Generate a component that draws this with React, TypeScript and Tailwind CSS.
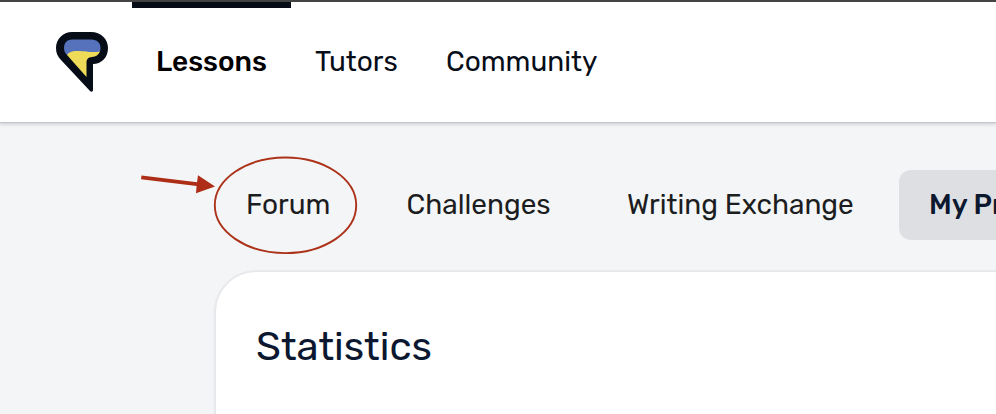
function Logo() {
  return (
    <svg className="h-[62px] w-[54px] shrink-0" viewBox="0 0 54 62" fill="none">
      <path d="M17 1 H36 C46 1 53 8 53 17 C53 27 46 33 38 33 V59 C38 61 36 61 35 60 L6 29 C2.500 25 1 22 1 17 C1 8 8 1 17 1 Z" fill="#060d17" />
      <path d="M17 8.500 H36 C42 8.500 45.500 12 45.500 17 C45.500 19 45 20.500 44 21.500 L12 24 C10 22 9 20 9 17 C9 12 12 8.500 17 8.500 Z" fill="#5672bd" />
      <path d="M12 24 C14 21 17 20 22 20 C32 20 36 22 45 20.500 C43.500 24 41 25.500 37 26 C33 26.500 31.500 28 31.500 32 V46 Z" fill="#eedc59" />
    </svg>
  );
}

function HeaderLink({ label, box, text, active = false }: { label: string; box: string; text: string; active?: boolean }) {
  return (
    <a className={`relative flex h-full shrink-0 items-center whitespace-nowrap pl-6 pb-px text-[28px] ${box} ${text}`}>
      {active && <span className="absolute inset-x-0 top-0 h-[6px] bg-[#060d17]" />}
      {label}
    </a>
  );
}

function SectionLink({ label, box, text }: { label: string; box: string; text: string }) {
  return (
    <a className={`flex h-[70px] shrink-0 items-center whitespace-nowrap rounded-xl text-[28px] ${box} ${text}`}>{label}</a>
  );
}

export default function App() {
  return (
    <div className="flex h-[414px] w-[996px] flex-col overflow-hidden bg-[#f3f5f7] font-['Rubik','Roboto',sans-serif]">
      <header className="z-10 flex h-[122px] shrink-0 border-t-2 border-[#444444] bg-white shadow-[0_1px_0_#c4c6cb,0_2px_2px_#d2d4d8,0_3px_4px_#dfe0e4]">
        <div className="flex w-[132px] shrink-0 pl-[55px] pt-[29px]">
          <Logo />
        </div>
        <nav className="flex h-full">
          <HeaderLink label="Lessons" box="w-[159px]" text="font-medium text-black" active />
          <HeaderLink label="Tutors" box="w-[131px]" text="text-[#070e19]" />
          <HeaderLink label="Community" box="w-[199px]" text="text-[#070e19]" />
        </nav>
      </header>
      <main className="flex grow flex-col pl-[216px] pt-12">
        <nav className="relative flex gap-4">
          <SectionLink label="Forum" box="w-[145px] pl-[30px]" text="text-[#1c1d20]" />
          <SectionLink label="Challenges" box="w-[204px] pl-[29.5px]" text="text-[#1c1d20]" />
          <SectionLink label="Writing Exchange" box="w-[286px] pl-[30px]" text="text-[#1c1d20]" />
          <SectionLink label="My Profile" box="w-[200px] pl-[30px] bg-[#dedfe3]" text="font-medium text-[#0b1830]" />
          <svg className="pointer-events-none absolute left-[-86px] top-[-20px] h-[110px] w-[240px]" viewBox="130 150 240 110" fill="none">
            <ellipse cx="285.5" cy="205.300" rx="70.700" ry="47.800" stroke="#ac3219" strokeWidth="1.900" />
            <path d="M141.500 175.500 L197 182.300 L198 175.200 L215 186.500 L196 193.300 L196.600 186 L141 179.300 Z" fill="#ad2d16" />
          </svg>
        </nav>
        <section className="mt-8 h-[180px] w-[900px] shrink-0 rounded-tl-[40px] bg-white pl-10 pt-[51px] shadow-[0_0_0_1px_#e6e7ea,0_0_0_2px_#e9eaed,0_3px_4px_#d5d6da]">
          <h1 className="text-[40px] leading-[48px] text-[#0b1830]">Statistics</h1>
        </section>
      </main>
    </div>
  );
}
